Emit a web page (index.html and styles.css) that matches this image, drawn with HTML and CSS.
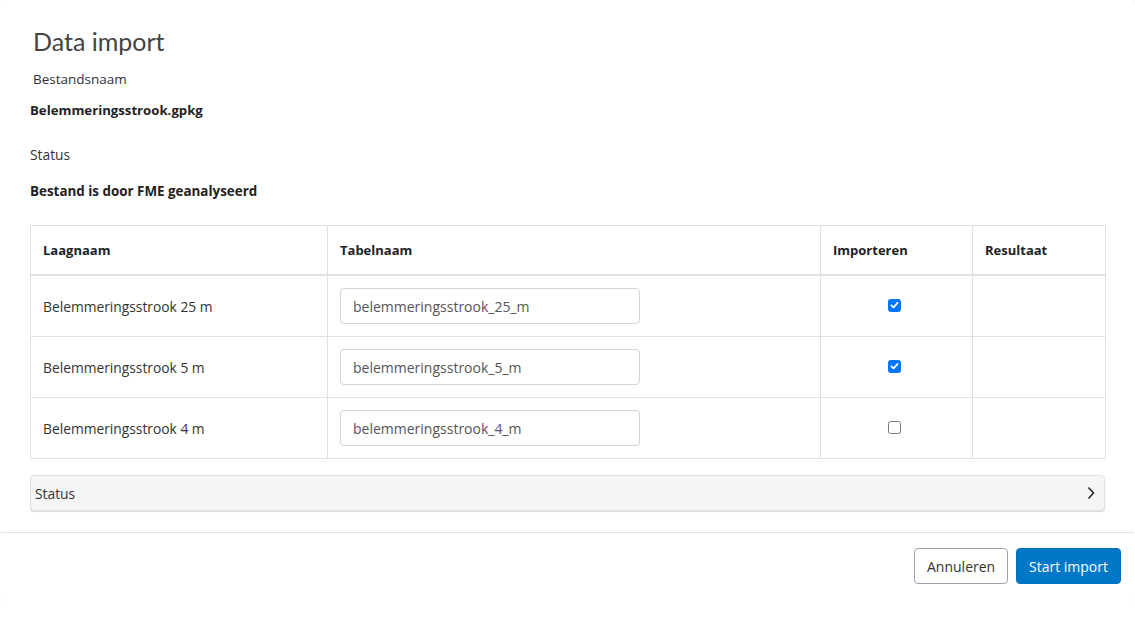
FILE: index.html
```html
<!DOCTYPE html>
<html lang="nl">
<head>
<meta charset="utf-8">
<title>Data import</title>
<link rel="stylesheet" href="styles.css">
</head>
<body>
<div class="modal">
  <div class="modal-body">
    <h1 class="title">Data import</h1>
    <div class="label first">Bestandsnaam</div>
    <div class="value v1">Belemmeringsstrook.gpkg</div>
    <div class="label">Status</div>
    <div class="value">Bestand is door FME geanalyseerd</div>
    <table class="grid">
      <thead>
        <tr>
          <th class="c1">Laagnaam</th>
          <th class="c2">Tabelnaam</th>
          <th class="c3">Importeren</th>
          <th class="c4">Resultaat</th>
        </tr>
      </thead>
      <tbody>
        <tr>
          <td>Belemmeringsstrook 25 m</td>
          <td><input class="field" type="text" value="belemmeringsstrook_25_m"></td>
          <td class="center"><span class="cb checked"><svg viewBox="0 0 12 12" width="12" height="12"><path d="M2.6 6.3 L5 8.6 L9.4 3.6" fill="none" stroke="#fff" stroke-width="1.9" stroke-linecap="round" stroke-linejoin="round"/></svg></span></td>
          <td></td>
        </tr>
        <tr>
          <td>Belemmeringsstrook 5 m</td>
          <td><input class="field" type="text" value="belemmeringsstrook_5_m"></td>
          <td class="center"><span class="cb checked"><svg viewBox="0 0 12 12" width="12" height="12"><path d="M2.6 6.3 L5 8.6 L9.4 3.6" fill="none" stroke="#fff" stroke-width="1.9" stroke-linecap="round" stroke-linejoin="round"/></svg></span></td>
          <td></td>
        </tr>
        <tr>
          <td>Belemmeringsstrook 4 m</td>
          <td><input class="field" type="text" value="belemmeringsstrook_4_m"></td>
          <td class="center"><span class="cb"></span></td>
          <td></td>
        </tr>
      </tbody>
    </table>
    <div class="accordion">
      <span>Status</span>
      <svg class="chev" viewBox="0 0 10 14" width="10" height="14"><path d="M2.5 1.5 L7.5 7 L2.5 12.5" fill="none" stroke="#222" stroke-width="1.5"/></svg>
    </div>
  </div>
  <div class="modal-footer">
    <button class="btn btn-outline">Annuleren</button>
    <button class="btn btn-primary">Start import</button>
  </div>
</div>
</body>
</html>
```

FILE: styles.css
```css
html, body {
  margin: 0;
  padding: 0;
  background: #fff;
}
body {
  font-family: "Open Sans", "Noto Sans", sans-serif;
  color: #333;
  font-size: 13.8px;
}
.modal {
  width: 1135px;
  height: 601px;
  box-sizing: border-box;
  border: 1px solid transparent;
  border-radius: 4px;
  box-shadow: 0 0 0 1px #f4f4f4;
  background: #fff;
  display: flex;
  flex-direction: column;
}
.modal-body {
  padding: 24px 29px 21px 29px;
  border-bottom: 1px solid #e2e2e2;
}
.title {
  margin: 0 0 0 3px;
  font-family: "Lato", sans-serif;
  font-weight: 400;
  font-size: 25px;
  line-height: 32px;
  color: #444;
}
.label {
  margin-top: 25px;
  line-height: 20px;
  color: #333;
}
.label.first {
  margin-top: 12px;
  margin-left: 3px;
  font-size: 13.5px;
}
.value {
  margin-top: 16px;
  font-weight: 700;
  font-size: 13.4px;
  line-height: 20px;
  color: #222;
}
.value.v1 {
  margin-top: 11px;
  font-size: 13.2px;
}
.grid {
  margin-top: 24px;
  width: 1076px;
  border-collapse: collapse;
  table-layout: fixed;
}
.grid th, .grid td {
  border: 1px solid #dee2e6;
  padding: 0 12px;
  text-align: left;
  vertical-align: middle;
  color: #333;
}
.grid th {
  height: 48px;
  font-weight: 700;
  font-size: 13px;
  border-bottom: 2px solid #dee2e6;
  color: #222;
}
.grid td {
  height: 60px;
}
.c1 { width: 272px; }
.c2 { width: 468px; }
.c3 { width: 127px; }
.grid td.center { text-align: center; padding-left: 8px; padding-right: 13px; }
.field {
  display: block;
  box-sizing: border-box;
  width: 300px;
  height: 36px;
  padding: 0 12px;
  border: 1px solid #ced4da;
  border-radius: 4px;
  font-family: inherit;
  font-size: 14px;
  color: #555;
  background: #fff;
}
.cb {
  display: inline-flex;
  align-items: center;
  justify-content: center;
  box-sizing: border-box;
  width: 13px;
  height: 13px;
  margin-bottom: 4px;
  border: 1px solid #767676;
  border-radius: 2.5px;
  background: #fff;
  vertical-align: middle;
}
.cb.checked {
  background: #0075ff;
  border-color: #0075ff;
}
.accordion {
  margin-top: 16px;
  height: 36px;
  box-sizing: border-box;
  background: #f5f5f5;
  border: 1px solid #e0e0e0;
  border-radius: 4px;
  box-shadow: 0 1px 1px rgba(0,0,0,0.15);
  display: flex;
  align-items: center;
  justify-content: space-between;
  padding: 0 8px 0 4px;
  color: #333;
}
.modal-footer {
  display: flex;
  justify-content: flex-end;
  gap: 8px;
  padding: 15px 13px 0 0;
}
.btn {
  font-family: inherit;
  font-size: 14px;
  height: 36px;
  border-radius: 4px;
  padding: 0 12px;
  cursor: pointer;
}
.btn-outline {
  background: #fff;
  border: 1px solid #9aa3af;
  color: #333;
  width: 94px;
}
.btn-primary {
  background: #0078c8;
  border: 1px solid #0070bd;
  color: #fff;
  width: 105px;
}
```
